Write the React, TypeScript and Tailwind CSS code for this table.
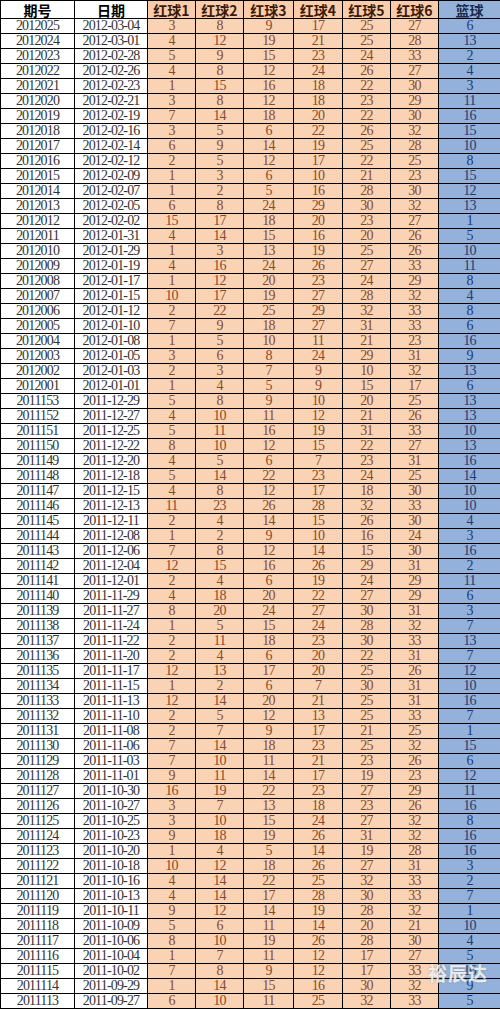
const rows = `2012025 2012-03-04 3 8 9 17 25 27 6
2012024 2012-03-01 4 12 19 21 25 28 13
2012023 2012-02-28 5 9 15 23 24 33 2
2012022 2012-02-26 4 8 12 24 26 27 4
2012021 2012-02-23 1 15 16 18 22 30 3
2012020 2012-02-21 3 8 12 18 23 29 11
2012019 2012-02-19 7 14 18 20 22 30 16
2012018 2012-02-16 3 5 6 22 26 32 15
2012017 2012-02-14 6 9 14 19 25 28 10
2012016 2012-02-12 2 5 12 17 22 25 8
2012015 2012-02-09 1 3 6 10 21 23 15
2012014 2012-02-07 1 2 5 16 28 30 12
2012013 2012-02-05 6 8 24 29 30 32 13
2012012 2012-02-02 15 17 18 20 23 27 1
2012011 2012-01-31 4 14 15 16 20 26 5
2012010 2012-01-29 1 3 13 19 25 26 10
2012009 2012-01-19 4 16 24 26 27 33 11
2012008 2012-01-17 1 12 20 23 24 29 8
2012007 2012-01-15 10 17 19 27 28 32 4
2012006 2012-01-12 2 22 25 29 32 33 8
2012005 2012-01-10 7 9 18 27 31 33 6
2012004 2012-01-08 1 5 10 11 21 23 16
2012003 2012-01-05 3 6 8 24 29 31 9
2012002 2012-01-03 2 3 7 9 10 32 13
2012001 2012-01-01 1 4 5 9 15 17 6
2011153 2011-12-29 5 8 9 10 20 25 13
2011152 2011-12-27 4 10 11 12 21 26 13
2011151 2011-12-25 5 11 16 19 31 33 10
2011150 2011-12-22 8 10 12 15 22 27 13
2011149 2011-12-20 4 5 6 7 23 31 16
2011148 2011-12-18 5 14 22 23 24 25 14
2011147 2011-12-15 4 8 12 17 18 30 10
2011146 2011-12-13 11 23 26 28 32 33 10
2011145 2011-12-11 2 4 14 15 26 30 4
2011144 2011-12-08 1 2 9 10 16 24 3
2011143 2011-12-06 7 8 12 14 15 30 16
2011142 2011-12-04 12 15 16 26 29 31 2
2011141 2011-12-01 2 4 6 19 24 29 11
2011140 2011-11-29 4 18 20 22 27 29 6
2011139 2011-11-27 8 20 24 27 30 31 3
2011138 2011-11-24 1 5 15 24 28 32 7
2011137 2011-11-22 2 11 18 23 30 33 13
2011136 2011-11-20 2 4 6 20 22 31 7
2011135 2011-11-17 12 13 17 20 25 26 12
2011134 2011-11-15 1 2 6 7 30 31 10
2011133 2011-11-13 12 14 20 21 25 31 16
2011132 2011-11-10 2 5 12 13 25 33 7
2011131 2011-11-08 2 7 9 17 21 25 1
2011130 2011-11-06 7 14 18 23 25 32 15
2011129 2011-11-03 7 10 11 21 23 26 6
2011128 2011-11-01 9 11 14 17 19 23 12
2011127 2011-10-30 16 19 22 23 27 29 11
2011126 2011-10-27 3 7 13 18 23 26 16
2011125 2011-10-25 3 10 15 24 27 32 8
2011124 2011-10-23 9 18 19 26 31 32 16
2011123 2011-10-20 1 4 5 14 19 28 16
2011122 2011-10-18 10 12 18 26 27 31 3
2011121 2011-10-16 4 14 22 25 32 33 2
2011120 2011-10-13 4 14 17 28 30 33 7
2011119 2011-10-11 9 12 14 19 28 32 1
2011118 2011-10-09 5 6 11 14 20 21 10
2011117 2011-10-06 8 10 19 26 28 30 4
2011116 2011-10-04 1 7 11 12 17 27 5
2011115 2011-10-02 7 8 9 12 17 33 16
2011114 2011-09-29 1 14 15 16 30 32 9
2011113 2011-09-27 6 10 11 25 32 33 5`
  .split("\n")
  .map((line) => line.trim().split(" "))

const headers = ["期号", "日期", "红球1", "红球2", "红球3", "红球4", "红球5", "红球6", "篮球"]

const cell = "flex items-center justify-center border-r border-b border-black"

export default function App() {
  return (
    <div className="relative w-[500px] h-[1009px] bg-white overflow-hidden">
      <div className="grid grid-cols-[74px_73px_48px_48px_50px_49px_48px_48px_62px] border-l border-t border-black font-['Liberation_Serif','Noto_Sans_CJK_SC',serif]">
        {/* header */}
        {headers.map((h, i) => (
          <div
            key={h}
            className={`${cell} h-[18px] text-[14px] leading-[16px] font-bold font-['Noto_Sans_CJK_SC',sans-serif] ${
              i < 2
                ? "bg-white text-black"
                : i < 8
                ? "bg-[#f9cdab] text-[#3d1a08]"
                : "bg-[#95b2d9] text-[#1b2c4d]"
            }`}
          >
            {h}
          </div>
        ))}

        {/* data rows */}
        {rows.map((r) =>
          r.map((v, i) => (
            <div
              key={r[0] + "-" + i}
              className={`${cell} h-[15px] text-[14px] leading-[14px] tracking-[-0.06em] ${
                i < 2
                  ? "bg-white text-[#333333]"
                  : i < 8
                  ? "bg-[#fad3b4] text-[#874a2c]"
                  : "bg-[#93b1da] text-[#1e3b73]"
              }`}
            >
              {v}
            </div>
          ))
        )}
      </div>

      {/* watermark */}
      <div className="absolute left-[428px] top-[959px] text-[19px] font-bold text-white/80 tracking-[1px] font-['Noto_Sans_CJK_SC',sans-serif] [text-shadow:0_0_2px_rgba(120,120,120,0.6)]">
        裕辰达
      </div>
    </div>
  )
}
